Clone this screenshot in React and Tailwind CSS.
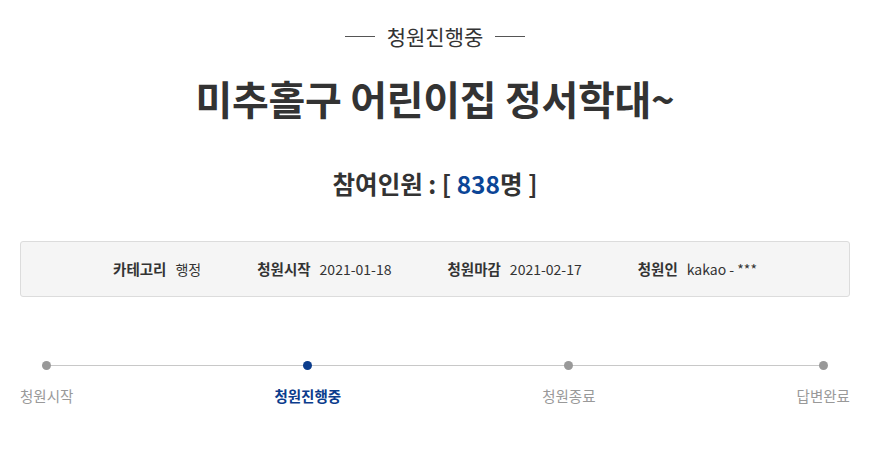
import React from 'react';

const font = { fontFamily: '"Noto Sans CJK KR", "Noto Sans", sans-serif' };

const steps = [
    { label: '청원시작', active: false },
    { label: '청원진행중', active: true },
    { label: '청원종료', active: false },
    { label: '답변완료', active: false },
];

function InfoItem({ label, value }) {
    return (
        <li className="flex items-center gap-[9px]">
            <span className="font-bold text-[14.5px] text-[#333]">{label}</span>
            <span className="text-[14px] text-[#333]">{value}</span>
        </li>
    );
}

export default function App() {
    return (
        <div className="w-[874px] h-[450px] bg-white pl-[20px] pr-[24px]" style={font}>
            <div className="flex items-center justify-center gap-[12px] pt-[22px]">
                <span className="w-[30px] h-px bg-[#555]" />
                <span className="text-[21px] leading-[28px] text-[#333]">청원진행중</span>
                <span className="w-[30px] h-px bg-[#555]" />
            </div>

            <h1 className="mt-[24px] text-center text-[40px] leading-[48px] font-bold text-[#333] tracking-[-0.3px]">
                미추홀구 어린이집 정서학대~
            </h1>

            <h2 className="mt-[46px] text-center text-[24.5px] leading-[32px] font-bold text-[#333]">
                참여인원 : [ <span className="text-[#0b4596]">838</span>명 ]
            </h2>

            <ul className="mt-[41px] h-[56px] flex items-center justify-center gap-[56px] bg-[#f5f5f5] border border-[#dcdcdc] rounded-[3px]">
                <InfoItem label="카테고리" value="행정" />
                <InfoItem label="청원시작" value="2021-01-18" />
                <InfoItem label="청원마감" value="2021-02-17" />
                <InfoItem label="청원인" value="kakao - ***" />
            </ul>

            <div className="relative mt-[64px]">
                <div className="absolute left-[26px] right-[28px] top-[4px] h-px bg-[#c8c8c8]" />
                <ol className="relative flex justify-between">
                    {steps.map((s) => (
                        <li key={s.label} className="flex flex-col items-center">
                            <span className={`w-[9px] h-[9px] rounded-full ${s.active ? 'bg-[#0b3c8c]' : 'bg-[#999]'}`} />
                            <span className={`mt-[16px] text-[14.5px] leading-[20px] ${s.active ? 'font-bold text-[#0b3c8c]' : 'text-[#999]'}`}>
                                {s.label}
                            </span>
                        </li>
                    ))}
                </ol>
            </div>
        </div>
    );
}
